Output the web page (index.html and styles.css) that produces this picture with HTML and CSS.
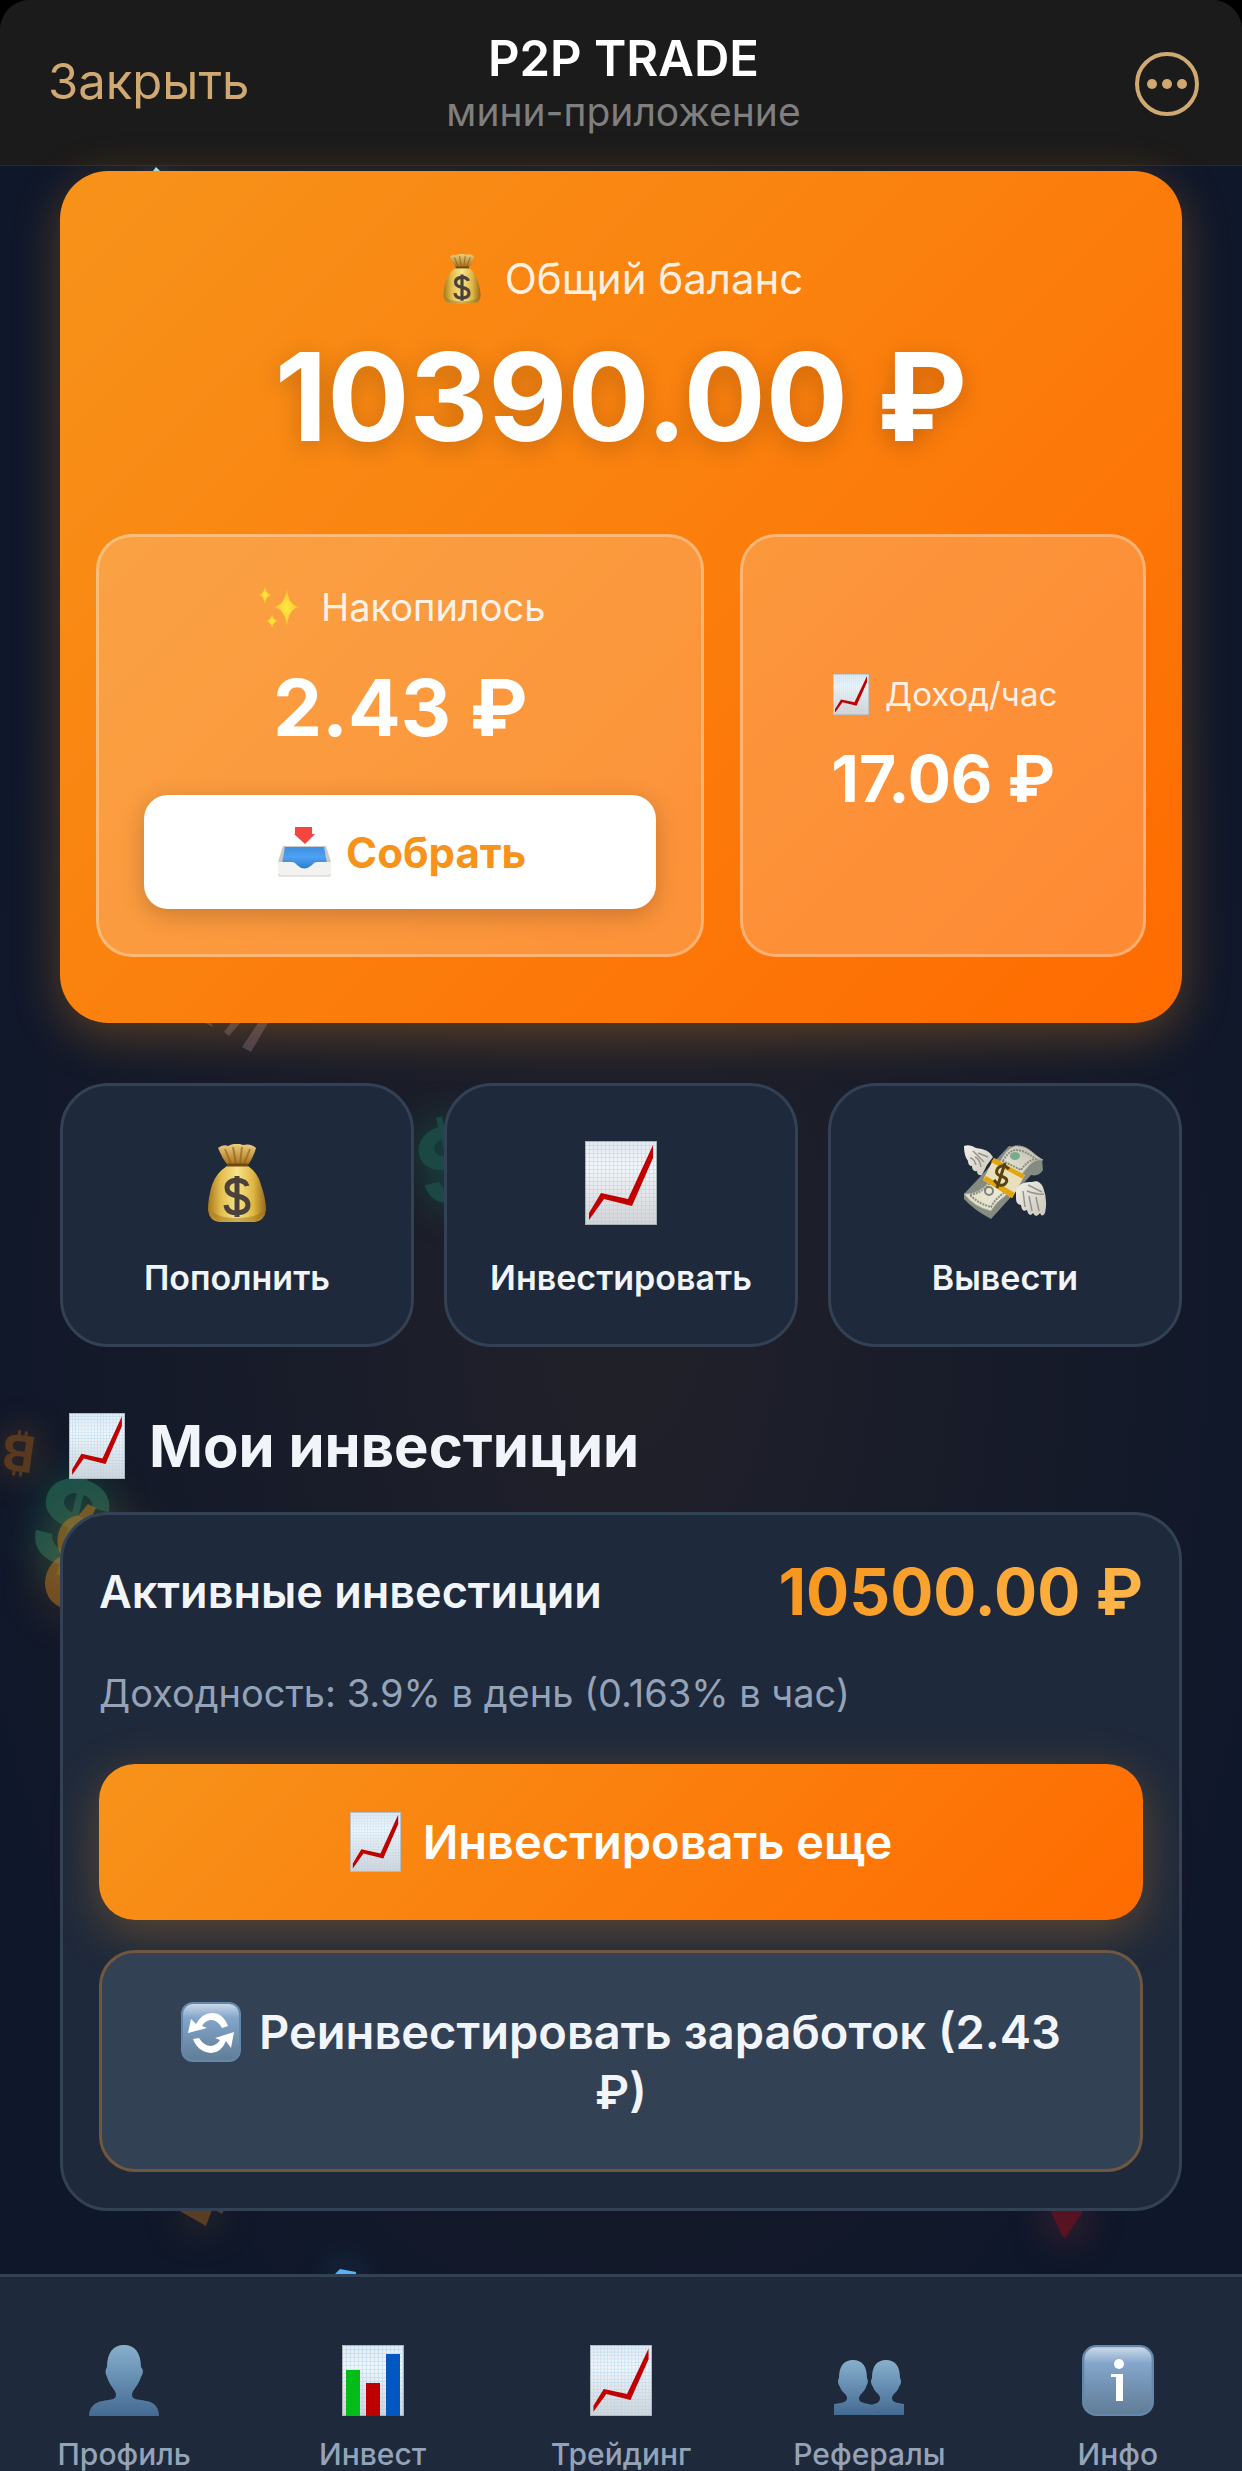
FILE: index.html
```html
<!DOCTYPE html>
<html lang="ru">
<head>
<meta charset="utf-8">
<meta name="viewport" content="width=device-width, initial-scale=1">
<title>P2P TRADE</title>
<link rel="stylesheet" href="styles.css">
</head>
<body>
<svg class="sprite" width="0" height="0" aria-hidden="true">
  <defs>
    <linearGradient id="paper" x1="0" y1="0" x2="0" y2="1"><stop offset="0" stop-color="#e3eaf1"/><stop offset=".3" stop-color="#f2f7fb"/><stop offset="1" stop-color="#d3d5d8"/></linearGradient>
    <pattern id="grid" width="4" height="4" patternUnits="userSpaceOnUse"><path d="M0 .5H4M.5 0V4" stroke="#9fcdee" stroke-width="1" opacity=".45"/></pattern>
    <linearGradient id="bagFill" x1="0" y1="0" x2="1" y2="0"><stop offset="0" stop-color="#a5781d"/><stop offset=".22" stop-color="#e2bd4d"/><stop offset=".5" stop-color="#f7e48a"/><stop offset=".78" stop-color="#dfb743"/><stop offset="1" stop-color="#96691b"/></linearGradient>
    <linearGradient id="bagTop" x1="0" y1="0" x2="0" y2="1"><stop offset="0" stop-color="#efcf80"/><stop offset="1" stop-color="#a26c17"/></linearGradient>
    <linearGradient id="blue" x1="0" y1="0" x2="0" y2="1"><stop offset="0" stop-color="#88b0cc"/><stop offset=".45" stop-color="#6890b3"/><stop offset="1" stop-color="#456a92"/></linearGradient>
    <linearGradient id="tile" x1="0" y1="0" x2="0" y2="1"><stop offset="0" stop-color="#cfdcea"/><stop offset=".25" stop-color="#84a6cb"/><stop offset=".6" stop-color="#7292b2"/><stop offset="1" stop-color="#607c96"/></linearGradient>
    <linearGradient id="trayIn" x1="0" y1="0" x2="0" y2="1"><stop offset="0" stop-color="#3f8fe0"/><stop offset=".45" stop-color="#4ea1f3"/><stop offset="1" stop-color="#2a7cc9"/></linearGradient>
    <radialGradient id="star"><stop offset="0" stop-color="#ffe93c"/><stop offset="1" stop-color="#f8c22e"/></radialGradient>
    <linearGradient id="wing" x1="0" y1="0" x2="1" y2="1"><stop offset="0" stop-color="#f1efe8"/><stop offset="1" stop-color="#c9c7bb"/></linearGradient>
    <linearGradient id="note" x1="0" y1="1" x2="1" y2="0"><stop offset="0" stop-color="#dcdcc6"/><stop offset=".5" stop-color="#f0edda"/><stop offset="1" stop-color="#b9b9aa"/></linearGradient>
  </defs>
  <symbol id="i-chart" viewBox="0 0 72 84" preserveAspectRatio="none">
    <rect width="72" height="84" fill="url(#paper)"/><rect width="72" height="84" fill="url(#grid)"/>
    <rect x=".5" y=".5" width="71" height="83" fill="none" stroke="#a9b0b7"/>
    <path d="M4 72 16 52 43 58 68 4V17L47 65 19 58 4 79Z" fill="#c00000"/>
  </symbol>
  <symbol id="i-bars" viewBox="0 0 62 71">
    <rect width="62" height="71" fill="url(#paper)"/><rect width="62" height="71" fill="url(#grid)"/>
    <rect x=".5" y=".5" width="61" height="70" fill="none" stroke="#a9b0b7"/>
    <rect x="4" y="25" width="14" height="46" fill="#02bd19"/><rect x="24" y="38" width="14" height="33" fill="#bd0000"/><rect x="44" y="9" width="14" height="62" fill="#0258c0"/>
  </symbol>
  <symbol id="i-bag" viewBox="0 0 58 78">
    <path d="M10 4Q15 0 20 2 28-2 35 1 43-1 48 4 45 15 39 22H20Q14 14 10 4Z" fill="url(#bagTop)"/>
    <path d="M17 5 23 20M25 3 28 20M34 3 32 20M42 5 36 20" stroke="#8d5d12" stroke-width="2" opacity=".6"/>
    <path d="M19 22H40Q50 29 53 41 58 55 58 66 57 77 46 78H12Q1 77 0 66 0 54 4 41 8 29 19 22Z" fill="url(#bagFill)"/>
    <path d="M19 21H40" stroke="#724711" stroke-width="3"/>
    <path d="M4 67Q10 74 29 74T55 67Q54 77 44 78H13Q4 76 4 67Z" fill="#986c1d" opacity=".45"/>
    <path d="M39 42Q38 37 29 36 19 37 19 44 19 50 29 52 40 54 40 61 40 68 29 69 19 69 18 61M29 32V73" fill="none" stroke="#4a403c" stroke-width="5"/>
  </symbol>
  <symbol id="i-sparkles" viewBox="0 0 42 42">
    <g fill="url(#star)"><path d="M28 2Q29 19 40 21 29 23 28 41 26 23 15 21 26 19 28 2Z"/><path d="M6 0Q7 8 12 9 7 10 6 18 5 10 0 9 5 8 6 0Z"/><path d="M13 28Q14 34 19 35 14 36 13 42 12 36 7 35 12 34 13 28Z"/></g>
  </symbol>
  <symbol id="i-inbox" viewBox="0 0 53 50">
    <path d="M5 19H48L53 35V47Q53 50 50 50H3Q0 50 0 47V35Z" fill="#c9c9c5"/>
    <path d="M7 20H46L50 42H3Z" fill="url(#trayIn)"/>
    <path d="M0 35H14Q17 35 19 38 26 45 34 38 36 35 39 35H53V47Q53 50 50 50H3Q0 50 0 47Z" fill="#f2f2f0"/>
    <path d="M1 47Q1 49 3 49H50Q52 49 52 47" fill="none" stroke="#d5d5d2"/>
    <path d="M17 0H34V7H37L27 17 16 7H17Z" fill="#f4463f"/>
  </symbol>
  <symbol id="i-money" viewBox="0 0 84 76">
    <path d="M1 49 46 1Q62 3 79 14L80 25Q76 32 68 30L28 74Q11 65 1 54Z" fill="#858b80"/>
    <path d="M1 49Q16 50 28 35L37 17Q43 4 52 1 61 0 69 7T80 15Q71 13 63 24L42 51Q33 57 28 66 11 62 1 49Z" fill="url(#note)" stroke="#a7aa9a"/>
    <path d="M40 16Q46 5 53 5 61 5 73 14 65 15 58 25Z" fill="none" stroke="#8b8d83" stroke-width="2" stroke-dasharray="2 1"/>
    <path d="M7 50Q19 48 27 38L42 47Q32 54 28 62 16 59 7 50Z" fill="none" stroke="#8b8d83" stroke-width="2" stroke-dasharray="2 1"/>
    <ellipse cx="52" cy="11" rx="5" ry="4" fill="#78aa8e"/><circle cx="26" cy="46" r="4" fill="none" stroke="#7f8277" stroke-width="2"/>
    <path d="M31 13 62 30 49 53 20 35Z" fill="#e9dfba"/><path d="M31 13 62 30 60 34 28 17ZM23 31 52 48 49 53 20 35Z" fill="#e3a50e"/>
    <path d="M46 24Q40 18 35 23 31 29 38 31 47 34 42 39 37 43 31 35M42 18 34 43" fill="none" stroke="#5a420e" stroke-width="3"/>
    <path d="M1 1Q7-1 13 3 26 4 30 12L24 20Q22 24 19 30 14 31 14 26 9 27 9 21 5 21 5 16 1 11 1 1Z" fill="url(#wing)"/>
    <path d="M10 6 21 17M7 13Q11 13 13 20M12 12Q17 14 18 22M15 8 25 12" stroke="#96958b" stroke-width="1.5" fill="none"/>
    <path d="M53 45Q57 36 69 37 76 34 80 42 85 55 82 68 79 73 77 68 73 74 70 68 66 73 64 65 59 68 58 60 53 60 53 53Z" fill="url(#wing)"/>
    <path d="M65 40 79 47M64 46Q75 50 81 49M60 46 62 62M66 51 69 66M73 52 76 66" stroke="#96958b" stroke-width="1.5" fill="none"/>
  </symbol>
  <symbol id="i-tile" viewBox="0 0 60 60" preserveAspectRatio="none">
    <rect x="1" y="1" width="58" height="58" rx="11" fill="url(#tile)" stroke="#6588aa" stroke-width="2"/>
  </symbol>
  <symbol id="i-refresh" viewBox="0 0 60 60">
    <use href="#i-tile" width="60" height="60"/>
    <path d="M15 22Q21 11 31 11 42 11 47 24L41 26Q36 17 29 18 24 19 21 24L26 26 7 31 10 17Z" fill="#fff"/>
    <path d="M45 39Q40 51 30 51 17 50 12 37L18 36Q23 44 30 44 36 43 39 38L34 36 53 30 50 46Z" fill="#fff"/>
  </symbol>
  <symbol id="i-info" viewBox="0 0 72 71">
    <use href="#i-tile" width="72" height="71"/>
    <circle cx="37" cy="19" r="5" fill="#fff"/><path d="M29 29H41V56H34V32H29Z" fill="#fff"/>
  </symbol>
  <symbol id="i-person" viewBox="0 0 70 71">
    <path d="M35 0C46 0 52 8 52 22 55 25 54 29 52 32 50 40 43 45 43 50 43 55 49 54 57 56 66 57 70 63 70 71H0C0 63 5 57 14 56 22 54 27 55 27 50 27 45 20 40 18 32 16 28 16 25 18 22 18 8 24 0 35 0Z" fill="url(#blue)"/>
  </symbol>
  <symbol id="i-people" viewBox="0 0 70 57">
    <path d="M19 1C28 1 33 7 33 19 35 23 33 25 32 28 30 34 25 35 25 40 25 45 36 44 39 47 44 50 45 53 45 56H0V45C6 44 13 44 13 39 13 35 8 34 6 28 4 25 3 22 5 19 5 7 10 1 19 1Z" fill="url(#blue)"/>
    <path d="M52 1C61 1 66 7 66 19 68 22 67 25 65 28 63 34 58 35 58 39 58 44 65 44 70 45V56H45C45 51 41 48 36 46 41 45 46 44 46 39 46 35 41 34 39 28 37 25 36 22 38 19 38 7 43 1 52 1Z" fill="url(#blue)"/>
  </symbol>
</svg>

<div class="app">
  <div class="decor" aria-hidden="true">
    <span class="coin coin-btc">₿</span>
    <span class="coin coin-usd">$</span>
    <span class="coin coin-usd-mid">$</span>
    <svg class="coin coin-bag" viewBox="0 0 90 105"><path d="M43 0 51 4 46 14H90V105H20C4 100 0 88 0 78 1 64 9 56 16 52 8 34 14 14 34 11Z" fill="#c47a1c" opacity=".5"/></svg>
    <svg class="coin coin-stripes" viewBox="0 0 64 30"><path d="M0 0H6L8 4ZM26 0H35L24 13 19 9ZM53 0H63L46 29 37 24Z" fill="#413c50"/></svg>
    <svg class="coin coin-tip" viewBox="0 0 46 16"><path d="M0 0H34L28 16ZM37 0H46L44 4Z" fill="#5a3d22"/></svg>
    <svg class="coin coin-drop" viewBox="0 0 34 32"><path d="M0 0H34V4L18 29Q16 32 13 29Z" fill="#571322"/></svg>
    <svg class="coin coin-gem" viewBox="0 0 24 8"><path d="M0 8 8 0 24 3V8Z" fill="#59b2f7"/></svg>
    <svg class="coin coin-spark" viewBox="0 0 14 8"><path d="M0 8 6 0 14 8Z" fill="#9be7f5"/></svg>
  </div>

  <header class="topbar">
    <button class="topbar-close" type="button">Закрыть</button>
    <div class="topbar-center">
      <h1 class="topbar-title">P2P TRADE</h1>
      <p class="topbar-sub">мини-приложение</p>
    </div>
    <button class="topbar-more" type="button" aria-label="Меню">
      <svg width="64" height="64" viewBox="0 0 64 64"><circle cx="32" cy="32" r="30" fill="none" stroke="currentColor" stroke-width="4"/><g fill="currentColor"><circle cx="17" cy="32" r="5"/><circle cx="32" cy="32" r="5"/><circle cx="47" cy="32" r="5"/></g></svg>
    </button>
  </header>

  <main class="content">
    <section class="balance">
      <p class="balance-label"><svg width="38" height="50"><use href="#i-bag"/></svg>Общий баланс</p>
      <p class="balance-amount">10390.00 ₽</p>
      <div class="balance-grid">
        <div class="stat">
          <p class="stat-label"><svg width="42" height="42"><use href="#i-sparkles"/></svg>Накопилось</p>
          <p class="stat-value">2.43 ₽</p>
          <button class="collect" type="button"><svg width="53" height="50"><use href="#i-inbox"/></svg>Собрать</button>
        </div>
        <div class="stat stat-rate">
          <p class="rate-label"><svg width="36" height="41"><use href="#i-chart"/></svg>Доход/час</p>
          <p class="rate-value">17.06 ₽</p>
        </div>
      </div>
    </section>

    <div class="actions">
      <button class="action" type="button"><svg width="58" height="84" viewBox="0 -3 58 84"><use href="#i-bag" width="58" height="78"/></svg>Пополнить</button>
      <button class="action" type="button"><svg width="72" height="84"><use href="#i-chart"/></svg>Инвестировать</button>
      <button class="action" type="button"><svg width="84" height="84"><use href="#i-money"/></svg>Вывести</button>
    </div>

    <h2 class="section-title"><svg width="56" height="66"><use href="#i-chart"/></svg>Мои инвестиции</h2>

    <section class="invest">
      <div class="invest-head">
        <h3 class="invest-title">Активные инвестиции</h3>
        <span class="invest-amount">10500.00 ₽</span>
      </div>
      <p class="invest-yield">Доходность: 3.9% в день (0.163% в час)</p>
      <button class="btn btn-primary" type="button"><svg width="51" height="60"><use href="#i-chart"/></svg>Инвестировать еще</button>
      <button class="btn btn-secondary" type="button"><svg width="60" height="60"><use href="#i-refresh"/></svg>Реинвестировать заработок (2.43 ₽)</button>
    </section>
  </main>

  <nav class="tabs">
    <a class="tab" href="#profile"><svg width="70" height="71"><use href="#i-person"/></svg>Профиль</a>
    <a class="tab" href="#invest"><svg width="62" height="71"><use href="#i-bars"/></svg>Инвест</a>
    <a class="tab" href="#trading"><svg width="62" height="71"><use href="#i-chart"/></svg>Трейдинг</a>
    <a class="tab" href="#referrals"><svg width="70" height="71" viewBox="0 0 70 71"><use href="#i-people" y="14" width="70" height="57"/></svg>Рефералы</a>
    <a class="tab" href="#info"><svg width="72" height="71"><use href="#i-info"/></svg>Инфо</a>
  </nav>
</div>
</body>
</html>
```
FILE: styles.css
```css
*, *::before, *::after { box-sizing: border-box; }

body {
  margin: 0;
  background: #000;
  color: #f1f5f9;
  font-family: Inter, "Liberation Sans", sans-serif;
}

h1, h2, h3, p { margin: 0; }
button { border: 0; padding: 0; background: none; color: inherit; font: inherit; cursor: pointer; }
svg { display: block; flex: none; }
.sprite { position: absolute; }

.app {
  position: relative;
  isolation: isolate;
  display: flex;
  flex-direction: column;
  min-height: 100vh;
  overflow: hidden;
  border-radius: 30px 30px 0 0;
  background:
    radial-gradient(ellipse 56% 48% at 50% 53%, rgba(247, 147, 26, .08), rgba(247, 147, 26, 0)),
    #0f172a;
}

/* Floating coins behind the cards */
.decor { position: absolute; inset: 0; z-index: -1; }
.coin { position: absolute; overflow: visible; line-height: 1; font-weight: 700; }
.coin-btc { left: 2px; top: 1428px; font-size: 50px; color: #58391f; transform: rotate(188deg); text-shadow: 0 0 36px rgba(247, 147, 26, .35); }
.coin-usd { left: 34px; top: 1463px; font-size: 118px; color: #1d5149; transform: rotate(14deg); text-shadow: 0 0 40px rgba(16, 185, 129, .35); }
.coin-usd-mid { left: 416px; top: 1112px; font-size: 104px; color: #1b4843; transform: rotate(-14deg); text-shadow: 0 0 40px rgba(16, 185, 129, .35); }
.coin-bag { left: 45px; top: 1504px; width: 90px; filter: drop-shadow(0 0 24px rgba(247, 147, 26, .4)); }
.coin-stripes { left: 205px; top: 1023px; width: 64px; }
.coin-tip { left: 178px; top: 2210px; width: 46px; filter: drop-shadow(0 0 20px rgba(247, 147, 26, .5)); }
.coin-drop { left: 1049px; top: 2207px; width: 34px; filter: drop-shadow(0 0 20px rgba(239, 68, 68, .5)); }
.coin-gem { left: 332px; top: 2269px; width: 24px; filter: drop-shadow(0 0 16px rgba(56, 160, 240, .8)); }
.coin-spark { left: 150px; top: 167px; width: 14px; filter: drop-shadow(0 0 12px rgba(60, 200, 230, .8)); }

.topbar {
  display: grid;
  grid-template-columns: 1fr auto 1fr;
  align-items: center;
  padding: 31px 43px 28px 48px;
  border-bottom: 1px solid #29292c;
  background: #1b1b1b;
  text-align: center;
}
.topbar-close { justify-self: start; padding-bottom: 4px; color: #d0a972; font-size: 49px; line-height: 56px; }
.topbar-title { color: #fff; font-size: 49px; font-weight: 600; line-height: 56px; }
.topbar-sub { color: #7f7f7f; font-size: 39px; line-height: 50px; }
.topbar-more { justify-self: end; color: #d0a972; }

.content { padding: 5px 60px 63px; }

.balance {
  padding: 78px 36px 66px;
  border-radius: 48px;
  background: linear-gradient(135deg, #f7931a, #ff6b00);
  box-shadow: 0 12px 48px rgba(247, 147, 26, .3);
  color: #fff;
  text-align: center;
}
.balance-label svg, .stat-label svg, .rate-label svg, .collect svg { margin-left: 4px; }
.balance-label {
  display: flex; justify-content: center; align-items: center; gap: 24px;
  font-size: 42px; line-height: 60px; color: rgba(255, 255, 255, .9);
}
.balance-amount { margin-top: 16px; font-size: 122px; font-weight: 700; line-height: 144px; text-shadow: 0 6px 24px rgba(0, 0, 0, .2); }
.balance-grid { display: grid; grid-template-columns: 3fr 2fr; gap: 36px; margin-top: 65px; }

.stat {
  padding: 44px 45px 45px;
  border: 3px solid rgba(255, 255, 255, .3);
  border-radius: 36px;
  background: rgba(255, 255, 255, .2);
}
.stat-label { display: flex; justify-content: center; align-items: center; gap: 20px; font-size: 38px; line-height: 52px; color: rgba(255, 255, 255, .9); }
.stat-value { margin-top: 28px; font-size: 78px; font-weight: 700; line-height: 94px; }
.collect {
  display: flex; justify-content: center; align-items: center; gap: 15px;
  width: 100%; height: 114px; margin-top: 40px;
  border-radius: 24px; background: #fff; box-shadow: 0 6px 24px rgba(0, 0, 0, .2);
  color: #f7931a; font-size: 42px; font-weight: 700;
}
.stat-rate { display: flex; flex-direction: column; justify-content: center; }
.rate-label { display: flex; justify-content: center; align-items: center; gap: 16px; font-size: 33px; line-height: 48px; color: rgba(255, 255, 255, .9); }
.rate-value { margin-top: 20px; font-size: 64px; font-weight: 700; line-height: 82px; }

.actions { display: grid; grid-template-columns: repeat(3, minmax(0, 1fr)); gap: 30px; margin-top: 60px; }
.action {
  display: flex; flex-direction: column; align-items: center; gap: 32px;
  padding: 55px 0 45px;
  border: 3px solid #334155; border-radius: 48px; background: #1e293b;
  font-size: 34px; font-weight: 600; line-height: 42px;
}

.section-title { display: flex; align-items: center; gap: 24px; margin: 66px 9px 33px; font-size: 58px; font-weight: 700; line-height: 66px; }

.invest { padding: 37px 36px 36px; border: 3px solid #334155; border-radius: 48px; background: #1e293b; }
.invest-head { display: flex; justify-content: space-between; align-items: center; line-height: 80px; }
.invest-title { font-size: 45px; font-weight: 600; }
.invest-amount {
  background: linear-gradient(135deg, #f7931a, #ffb84d);
  background-clip: text; -webkit-background-clip: text; color: transparent;
  font-size: 64px; font-weight: 700;
}
.invest-yield { margin-top: 33px; color: #94a3b8; font-size: 38px; line-height: 56px; }

.btn { width: 100%; border-radius: 36px; font-size: 47px; font-weight: 600; line-height: 60px; }
.btn-primary {
  display: flex; justify-content: center; align-items: center; gap: 22px;
  margin-top: 43px; padding: 48px 60px;
  background: linear-gradient(135deg, #f7931a, #ff6b00);
  box-shadow: 0 12px 48px rgba(247, 147, 26, .3);
  color: #fff;
}
.btn-secondary { position: relative; margin-top: 30px; padding: 49px 57px 47px; border: 3px solid #6f583f; background: #334155; }
.btn-secondary svg { display: inline-block; margin-right: 18px; vertical-align: top; }

.tabs {
  display: grid; grid-template-columns: repeat(5, 1fr);
  margin-top: auto; padding-top: 68px;
  border-top: 3px solid #334155; background: #1e293b;
}
.tab {
  display: flex; flex-direction: column; align-items: center; gap: 22px;
  color: #94a3b8; font-size: 30px; font-weight: 500; line-height: 33px; text-decoration: none;
}
```
